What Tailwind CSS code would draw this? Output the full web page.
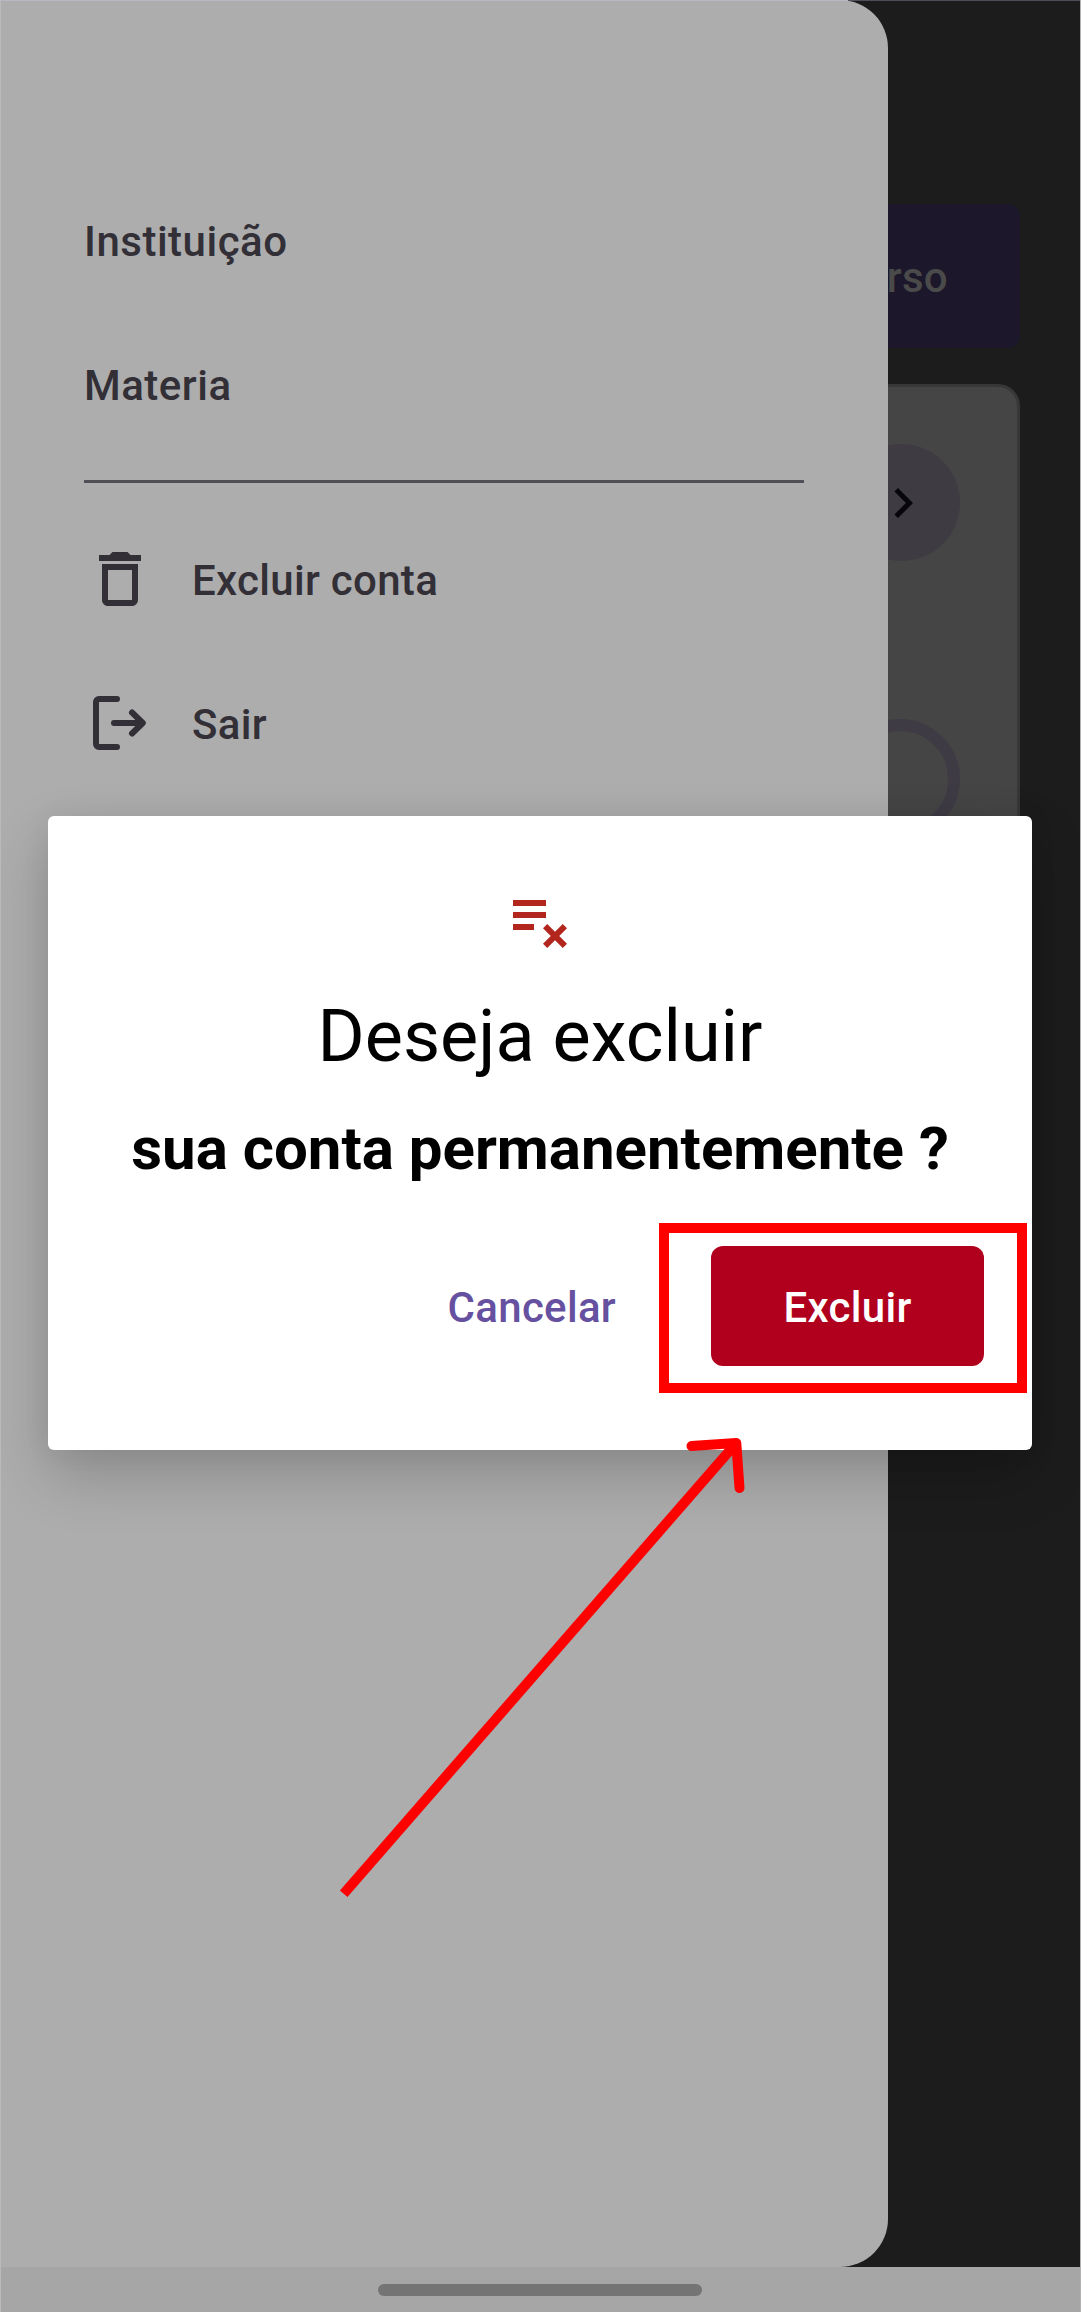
<!DOCTYPE html>
<html lang="pt-BR">
<head>
<meta charset="utf-8">
<title>Excluir conta</title>
<script src="https://cdn.jsdelivr.net/npm/@tailwindcss/browser@4"></script>
</head>
<body class="font-['Roboto',sans-serif] text-[42px] leading-[60px] font-medium">
<div class="relative w-[1081px] h-[2312px] overflow-hidden bg-[#1c1c1c] flex flex-col">

  <!-- Page behind the drawer -->
  <main class="h-[2267px] shrink-0 pl-[60px] pr-[61px] pt-[204px] flex flex-col gap-9">
    <div class="h-36 rounded-xl bg-[#1c172a] flex items-center justify-end pt-1 pr-[72px] text-[#4a4a4a]"><span class="tracking-[0.3px]">rso</span></div>
    <section class="h-[640px] rounded-[22px] border-3 border-[#373737] bg-[#454545] pt-[57px] pr-[57px] flex flex-col items-end gap-[158px]">
      <div class="size-[117px] rounded-full bg-[#3f3b43] flex items-center justify-center pl-0.5">
        <svg class="size-[60px] text-[#07060b]" viewBox="0 0 24 24" fill="currentColor"><path d="M8.59 16.59 13.17 12 8.59 7.41 10 6l6 6-6 6z"/></svg>
      </div>
      <div class="size-[120px] rounded-full border-12 border-[#3f3b45]"></div>
    </section>
  </main>

  <!-- System navigation bar -->
  <footer class="h-[45px] bg-[#a6a6a6] pt-[17px] pr-px flex justify-center"><div class="w-[324px] h-3 rounded-full bg-[#747474]"></div></footer>

  <!-- Drawer -->
  <aside class="absolute left-0 top-0 w-[888px] h-[2267px] rounded-r-[48px] bg-[#adadad] text-[#322f37] pl-[84px] pt-[168px] tracking-[0.3px]">
    <nav class="w-[720px] flex flex-col">
      <a class="h-36 pt-1 flex items-center tracking-[0.5px]">Instituição</a>
      <a class="h-36 pt-1 flex items-center tracking-[0.5px]">Materia</a>
      <hr class="mt-6 border-0 h-[3px] bg-[#504f55]">
      <a class="mt-6 h-36 flex items-center gap-9">
        <svg class="size-18" viewBox="0 0 24 24" fill="currentColor"><path d="M16 9v10H8V9h8m-1.5-6h-5l-1 1H5v2h14V4h-3.5l-1-1zM18 7H6v12c0 1.1.9 2 2 2h8c1.1 0 2-.9 2-2V7z"/></svg>
        <span class="pt-1">Excluir conta</span>
      </a>
      <a class="h-36 flex items-center gap-9">
        <svg class="size-18" viewBox="0 0 24 24" fill="none" stroke="currentColor" stroke-width="2" stroke-linecap="round" stroke-linejoin="round"><path d="M11 4H5a1 1 0 0 0-1 1v14a1 1 0 0 0 1 1h6M10 12h9.5M16 8.5l3.6 3.5-3.6 3.5"/></svg>
        <span class="pt-1">Sair</span>
      </a>
    </nav>
  </aside>

  <!-- Confirmation dialog -->
  <div role="dialog" class="absolute left-[48px] top-[816px] w-[984px] h-[634px] rounded-[6px] bg-white shadow-[0_26px_60px_rgba(0,0,0,0.2),0_0_30px_rgba(0,0,0,0.05)] pt-[66px] flex flex-col items-center text-black">
    <svg class="size-18 shrink-0 text-[#b3261e]" viewBox="0 0 24 24" fill="currentColor"><path d="M14 10H3v2h11v-2zm0-4H3v2h11V6zM3 16h7v-2H3v2zm11.41 6L17 19.41 19.59 22 21 20.59 18.41 18 21 15.41 19.59 14 17 16.59 14.41 14 13 15.41 15.59 18 13 20.59 14.41 22z"/></svg>
    <h1 class="mt-[35px] text-[72px] leading-[96px] font-normal whitespace-nowrap">Deseja excluir</h1>
    <h2 class="mt-[22px] text-[60px] leading-[84px] font-bold whitespace-nowrap">sua conta permanentemente ?</h2>
    <div class="mt-[55px] w-full pr-12 flex justify-end items-center tracking-[0.3px]">
      <button class="h-30 px-12 pt-1 mr-[47px] text-[#6650a0]">Cancelar</button>
      <button class="w-[273px] h-30 pt-1 rounded-xl bg-[#b0001e] text-white">Excluir</button>
    </div>
  </div>

  <!-- Red callout box and arrow -->
  <div class="absolute left-[659px] top-[1223px] w-[368px] h-[170px] border-10 border-[#ff0000]"></div>
  <svg class="absolute left-0 top-0 w-[1081px] h-[2312px]" viewBox="0 0 1081 2312" fill="none" stroke="#ff0000" stroke-width="10"><path d="M343.7 1893.7 736.3 1443"/><path d="M691.5 1446 736.3 1443 739.5 1488" stroke-linecap="round" stroke-linejoin="round"/></svg>

  <!-- Screen edge lines -->
  <div class="absolute inset-x-0 top-0 h-px bg-[#4f4d59]"></div>
  <div class="absolute left-0 top-0 w-[848px] h-px bg-[#b9b6c6]"></div>
  <div class="absolute left-0 top-0 w-px h-full bg-[#bababa]"></div>
  <div class="absolute right-0 top-0 w-px h-full bg-[#b4b4b0]"></div>
</div>
</body>
</html>
